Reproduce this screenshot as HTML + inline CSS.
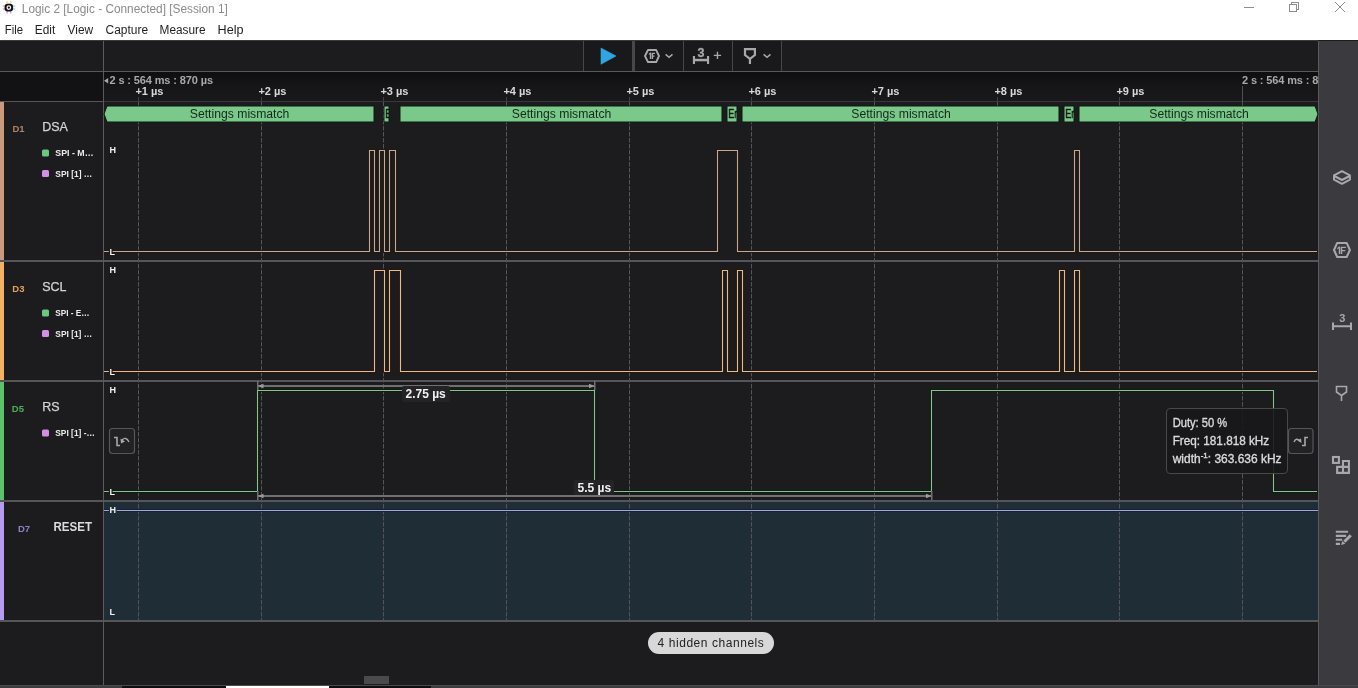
<!DOCTYPE html><html><head><meta charset="utf-8"><style>
html,body{margin:0;padding:0}
body{width:1358px;height:688px;overflow:hidden;position:relative;background:#1c1c1e;font-family:"Liberation Sans",sans-serif}
.a{position:absolute;white-space:nowrap}
svg{will-change:transform}
svg text{font-family:"Liberation Sans",sans-serif}
</style></head><body>
<svg class="a" style="left:0;top:0" width="1358" height="688">
<rect x="0" y="0" width="1358" height="40" fill="#ffffff"/>
<text x="21.8" y="13" font-size="12" fill="#8a8a8a" textLength="206" lengthAdjust="spacingAndGlyphs">Logic 2 [Logic - Connected] [Session 1]</text>
<text x="4.8" y="34" font-size="12" fill="#1e1e1e" textLength="18.3" lengthAdjust="spacingAndGlyphs">File</text>
<text x="34.8" y="34" font-size="12" fill="#1e1e1e" textLength="20.5" lengthAdjust="spacingAndGlyphs">Edit</text>
<text x="67.6" y="34" font-size="12" fill="#1e1e1e" textLength="25.6" lengthAdjust="spacingAndGlyphs">View</text>
<text x="105.6" y="34" font-size="12" fill="#1e1e1e" textLength="42.5" lengthAdjust="spacingAndGlyphs">Capture</text>
<text x="159.6" y="34" font-size="12" fill="#1e1e1e" textLength="46" lengthAdjust="spacingAndGlyphs">Measure</text>
<text x="217.6" y="34" font-size="12" fill="#1e1e1e" textLength="26" lengthAdjust="spacingAndGlyphs">Help</text>
<g>
<rect x="6.3" y="1" width="1.5" height="3" fill="#efe0a0"/><rect x="9.9" y="1" width="1.5" height="3" fill="#efe0a0"/>
<rect x="2.8" y="5.2" width="2.5" height="1.5" fill="#e0b0a8"/><rect x="2.8" y="8.3" width="2.5" height="1.5" fill="#e0b0a8"/>
<rect x="12.6" y="5.2" width="2.6" height="1.5" fill="#a8dcec"/><rect x="12.6" y="8.3" width="2.6" height="1.5" fill="#a8dcec"/>
<rect x="6.3" y="11" width="1.5" height="2.6" fill="#d0a8ec"/><rect x="9.9" y="11" width="1.5" height="2.6" fill="#d0a8ec"/>
<rect x="4.6" y="3.7" width="8.5" height="7.8" rx="3.2" fill="#141018"/>
<circle cx="8.85" cy="7.6" r="1.75" fill="#141018" stroke="#f4f4f4" stroke-width="1.3"/>
</g>
<g stroke="#8c8c8c" stroke-width="1" fill="none" shape-rendering="crispEdges">
<line x1="1244" y1="7.5" x2="1254" y2="7.5"/>
<rect x="1289.5" y="4.5" width="7" height="7"/>
<path d="M1291.5 4.5 V2.5 H1298.5 V9.5 H1296.5"/>
</g>
<path d="M1335 2 L1345 12 M1345 2 L1335 12" stroke="#8c8c8c" stroke-width="1" fill="none"/>
<rect x="0" y="40" width="1358" height="648" fill="#1c1c1e"/>
<rect x="0" y="41" width="1318" height="30" fill="#1c1c1e"/>
<rect x="0" y="40" width="1318" height="1" fill="#3a3a3e"/>
<rect x="584" y="41" width="197" height="30" fill="#19191b"/>
<rect x="0" y="71" width="1318" height="1" fill="#58585c"/>
<defs><linearGradient id="hg" x1="0" y1="0" x2="0" y2="1"><stop offset="0" stop-color="#0e0e10"/><stop offset="0.45" stop-color="#151517"/><stop offset="1" stop-color="#19191b"/></linearGradient></defs>
<rect x="0" y="72" width="1318" height="29" fill="url(#hg)"/>
<rect x="0" y="72" width="103" height="29" fill="#121214"/>
<rect x="0" y="101" width="103" height="1" fill="#56565a"/>
<rect x="104" y="101" width="1214" height="1" fill="#38373c"/>
<rect x="583" y="41" width="1" height="30" fill="#47474b"/>
<rect x="632" y="41" width="3" height="30" fill="#47474b"/>
<rect x="683" y="41" width="1" height="30" fill="#47474b"/>
<rect x="732" y="41" width="1" height="30" fill="#47474b"/>
<rect x="781" y="41" width="1" height="30" fill="#47474b"/>
<rect x="104" y="502" width="1214" height="118" fill="#1f2d37"/>
<rect x="138" y="97" width="1" height="4" fill="#424246"/>
<line x1="138.5" y1="102" x2="138.5" y2="620" stroke="#545458" stroke-width="1" stroke-dasharray="4.5 1.5"/>
<rect x="261" y="97" width="1" height="4" fill="#424246"/>
<line x1="261.5" y1="102" x2="261.5" y2="620" stroke="#545458" stroke-width="1" stroke-dasharray="4.5 1.5"/>
<rect x="383" y="97" width="1" height="4" fill="#424246"/>
<line x1="383.5" y1="102" x2="383.5" y2="620" stroke="#545458" stroke-width="1" stroke-dasharray="4.5 1.5"/>
<rect x="506" y="97" width="1" height="4" fill="#424246"/>
<line x1="506.5" y1="102" x2="506.5" y2="620" stroke="#545458" stroke-width="1" stroke-dasharray="4.5 1.5"/>
<rect x="629" y="97" width="1" height="4" fill="#424246"/>
<line x1="629.5" y1="102" x2="629.5" y2="620" stroke="#545458" stroke-width="1" stroke-dasharray="4.5 1.5"/>
<rect x="751" y="97" width="1" height="4" fill="#424246"/>
<line x1="751.5" y1="102" x2="751.5" y2="620" stroke="#545458" stroke-width="1" stroke-dasharray="4.5 1.5"/>
<rect x="874" y="97" width="1" height="4" fill="#424246"/>
<line x1="874.5" y1="102" x2="874.5" y2="620" stroke="#545458" stroke-width="1" stroke-dasharray="4.5 1.5"/>
<rect x="997" y="97" width="1" height="4" fill="#424246"/>
<line x1="997.5" y1="102" x2="997.5" y2="620" stroke="#545458" stroke-width="1" stroke-dasharray="4.5 1.5"/>
<rect x="1119" y="97" width="1" height="4" fill="#424246"/>
<line x1="1119.5" y1="102" x2="1119.5" y2="620" stroke="#545458" stroke-width="1" stroke-dasharray="4.5 1.5"/>
<rect x="1242" y="97" width="1" height="4" fill="#424246"/>
<line x1="1242.5" y1="102" x2="1242.5" y2="620" stroke="#545458" stroke-width="1" stroke-dasharray="4.5 1.5"/>
<rect x="1242" y="86" width="1" height="16" fill="#505054"/>
<rect x="0" y="260" width="1318" height="2" fill="#56565a"/>
<rect x="0" y="380" width="1318" height="2" fill="#56565a"/>
<rect x="0" y="500" width="1318" height="2" fill="#56565a"/>
<rect x="0" y="620" width="1318" height="2" fill="#56565a"/>
<rect x="103" y="41" width="1" height="644" fill="#5a5a5e"/>
<rect x="0" y="102" width="4" height="158" fill="#c99b7c"/>
<rect x="0" y="262" width="4" height="118" fill="#f5b163"/>
<rect x="0" y="382" width="4" height="118" fill="#5cc36b"/>
<rect x="0" y="502" width="4" height="118" fill="#b49bf0"/>
<rect x="1318" y="41" width="1" height="644" fill="#5a5a5e"/>
<rect x="1319" y="41" width="39" height="644" fill="#3b3a3f"/>
<rect x="0" y="685" width="1358" height="1" fill="#4a4a4e"/>
<rect x="0" y="686" width="1358" height="2" fill="#3d3d40"/>
<rect x="122" y="686" width="104" height="2" fill="#0e0e10"/>
<rect x="226" y="686" width="103" height="2" fill="#ffffff"/>
<rect x="329" y="686" width="102" height="2" fill="#0e0e10"/>
<rect x="364" y="676" width="25" height="8" fill="#4a4a4c"/>
<path d="M104 80.7 L108.2 78 L108.2 83.4 Z" fill="#a8a8a8"/>
<text x="109.5" y="84" font-size="11" font-weight="bold" fill="#a8a8a8" textLength="103.5" lengthAdjust="spacing">2 s : 564 ms : 870 µs</text>
<svg x="1240" y="70" width="78" height="20"><text x="2" y="14" font-size="11" font-weight="bold" fill="#a8a8a8" textLength="103.5" lengthAdjust="spacing">2 s : 564 ms : 870 µs</text></svg>
<text x="135.4" y="95.2" font-size="11" font-weight="bold" fill="#d8d8d8">+1 µs</text>
<text x="258.4" y="95.2" font-size="11" font-weight="bold" fill="#d8d8d8">+2 µs</text>
<text x="380.4" y="95.2" font-size="11" font-weight="bold" fill="#d8d8d8">+3 µs</text>
<text x="503.4" y="95.2" font-size="11" font-weight="bold" fill="#d8d8d8">+4 µs</text>
<text x="626.4" y="95.2" font-size="11" font-weight="bold" fill="#d8d8d8">+5 µs</text>
<text x="748.4" y="95.2" font-size="11" font-weight="bold" fill="#d8d8d8">+6 µs</text>
<text x="871.4" y="95.2" font-size="11" font-weight="bold" fill="#d8d8d8">+7 µs</text>
<text x="994.4" y="95.2" font-size="11" font-weight="bold" fill="#d8d8d8">+8 µs</text>
<text x="1116.4" y="95.2" font-size="11" font-weight="bold" fill="#d8d8d8">+9 µs</text>
<path d="M107 106 H374 V122 H107 L104 114.0 Z" fill="#7ac98a" stroke="#0a1a0e" stroke-width="1"/>
<text x="189.8" y="117.6" font-size="12" fill="#14281a" textLength="99.6" lengthAdjust="spacingAndGlyphs">Settings mismatch</text>
<path d="M384 106 H389 V122 H384 Z" fill="#7ac98a" stroke="#0a1a0e" stroke-width="1"/>
<svg x="384" y="106" width="5" height="16"><text transform="translate(1.2,0) scale(0.72,1)" x="0" y="12" font-size="12.5" fill="#0c1a10" stroke="#0c1a10" stroke-width="0.5">E</text></svg>
<path d="M400 106 H722 V122 H400 Z" fill="#7ac98a" stroke="#0a1a0e" stroke-width="1"/>
<text x="511.8" y="117.6" font-size="12" fill="#14281a" textLength="99.6" lengthAdjust="spacingAndGlyphs">Settings mismatch</text>
<path d="M727 106 H737 V122 H727 Z" fill="#7ac98a" stroke="#0a1a0e" stroke-width="1"/>
<svg x="727" y="106" width="10" height="16"><text transform="translate(1.2,0) scale(0.72,1)" x="0" y="12" font-size="12.5" fill="#0c1a10" stroke="#0c1a10" stroke-width="0.5">Er</text></svg>
<path d="M742 106 H1059 V122 H742 Z" fill="#7ac98a" stroke="#0a1a0e" stroke-width="1"/>
<text x="851.3" y="117.6" font-size="12" fill="#14281a" textLength="99.6" lengthAdjust="spacingAndGlyphs">Settings mismatch</text>
<path d="M1064 106 H1074 V122 H1064 Z" fill="#7ac98a" stroke="#0a1a0e" stroke-width="1"/>
<svg x="1064" y="106" width="10" height="16"><text transform="translate(1.2,0) scale(0.72,1)" x="0" y="12" font-size="12.5" fill="#0c1a10" stroke="#0c1a10" stroke-width="0.5">Er</text></svg>
<path d="M1079 106 H1315 L1318 114.0 L1315 122 H1079 Z" fill="#7ac98a" stroke="#0a1a0e" stroke-width="1"/>
<text x="1149.3" y="117.6" font-size="12" fill="#14281a" textLength="99.6" lengthAdjust="spacingAndGlyphs">Settings mismatch</text>
<text x="12.5" y="132" font-size="9.5" font-weight="bold" fill="#b0846a">D1</text>
<text x="42.2" y="131" font-size="12.5" fill="#d4d4d4" stroke="#d4d4d4" stroke-width="0.25">DSA</text>
<rect x="42" y="149.4" width="7" height="7" rx="1.5" fill="#6cc77f"/>
<text x="55.3" y="156.4" font-size="9" font-weight="bold" fill="#ececec" textLength="38.2" lengthAdjust="spacingAndGlyphs">SPI - M…</text>
<rect x="42" y="169.9" width="7" height="7" rx="1.5" fill="#d58de8"/>
<text x="55.3" y="176.9" font-size="9" font-weight="bold" fill="#ececec" textLength="37" lengthAdjust="spacingAndGlyphs">SPI [1] …</text>
<text x="12.3" y="292" font-size="9.5" font-weight="bold" fill="#e8a25a">D3</text>
<text x="42.2" y="291" font-size="12.5" fill="#d4d4d4" stroke="#d4d4d4" stroke-width="0.25">SCL</text>
<rect x="42" y="309.4" width="7" height="7" rx="1.5" fill="#6cc77f"/>
<text x="55.3" y="316.4" font-size="9" font-weight="bold" fill="#ececec" textLength="34.3" lengthAdjust="spacingAndGlyphs">SPI - E…</text>
<rect x="42" y="329.9" width="7" height="7" rx="1.5" fill="#d58de8"/>
<text x="55.3" y="336.9" font-size="9" font-weight="bold" fill="#ececec" textLength="36.8" lengthAdjust="spacingAndGlyphs">SPI [1] …</text>
<text x="11.8" y="412" font-size="9.5" font-weight="bold" fill="#4fae5a">D5</text>
<text x="42.2" y="411" font-size="12.5" fill="#d4d4d4" stroke="#d4d4d4" stroke-width="0.25">RS</text>
<rect x="42" y="429.4" width="7" height="7" rx="1.5" fill="#d58de8"/>
<text x="55.3" y="436.4" font-size="9" font-weight="bold" fill="#ececec" textLength="39.5" lengthAdjust="spacingAndGlyphs">SPI [1] -…</text>
<text x="18" y="532" font-size="9.5" font-weight="bold" fill="#8f7fc8">D7</text>
<text x="53.5" y="531" font-size="12" font-weight="bold" fill="#dcdcdc" textLength="38.5" lengthAdjust="spacingAndGlyphs">RESET</text>
<path d="M104 251.5 H369.5 V150.5 H374.5 V251.5 H379.5 V150.5 H384.5 V251.5 H389.5 V150.5 H395.5 V251.5 H717.5 V150.5 H737.5 V251.5 H1074.5 V150.5 H1079.5 V251.5 H1317" fill="none" stroke="#24170f" stroke-width="3.2"/>
<path d="M104 251.5 H369.5 V150.5 H374.5 V251.5 H379.5 V150.5 H384.5 V251.5 H389.5 V150.5 H395.5 V251.5 H717.5 V150.5 H737.5 V251.5 H1074.5 V150.5 H1079.5 V251.5 H1317" fill="none" stroke="#bcab9f" stroke-width="1.1"/>
<path d="M104 371.5 H374.5 V270.5 H384.5 V371.5 H389.5 V270.5 H400.5 V371.5 H722.5 V270.5 H727.5 V371.5 H737.5 V270.5 H742.5 V371.5 H1059.5 V270.5 H1064.5 V371.5 H1074.5 V270.5 H1079.5 V371.5 H1317" fill="none" stroke="#2a1606" stroke-width="3.2"/>
<path d="M104 371.5 H374.5 V270.5 H384.5 V371.5 H389.5 V270.5 H400.5 V371.5 H722.5 V270.5 H727.5 V371.5 H737.5 V270.5 H742.5 V371.5 H1059.5 V270.5 H1064.5 V371.5 H1074.5 V270.5 H1079.5 V371.5 H1317" fill="none" stroke="#d9bea6" stroke-width="1.1"/>
<path d="M104 491.5 H257.5 V390.5 H594.5 V491.5 H931.5 V390.5 H1273.5 V491.5 H1317" fill="none" stroke="#0b1f0e" stroke-width="3.2"/>
<path d="M104 491.5 H257.5 V390.5 H594.5 V491.5 H931.5 V390.5 H1273.5 V491.5 H1317" fill="none" stroke="#94bc99" stroke-width="1.1"/>
<rect x="104" y="509" width="1214" height="3" fill="#18203a"/>
<rect x="104" y="510" width="1214" height="1" fill="#a0aad0"/>
<text x="109.6" y="153.2" font-size="9" font-weight="bold" fill="#f0f0f0" stroke="#1c1c1e" stroke-width="2.5" paint-order="stroke">H</text>
<text x="109.6" y="255.1" font-size="9" font-weight="bold" fill="#f0f0f0" stroke="#1c1c1e" stroke-width="2.5" paint-order="stroke">L</text>
<text x="109.6" y="273.2" font-size="9" font-weight="bold" fill="#f0f0f0" stroke="#1c1c1e" stroke-width="2.5" paint-order="stroke">H</text>
<text x="109.6" y="375.1" font-size="9" font-weight="bold" fill="#f0f0f0" stroke="#1c1c1e" stroke-width="2.5" paint-order="stroke">L</text>
<text x="109.6" y="393.2" font-size="9" font-weight="bold" fill="#f0f0f0" stroke="#1c1c1e" stroke-width="2.5" paint-order="stroke">H</text>
<text x="109.6" y="495.1" font-size="9" font-weight="bold" fill="#f0f0f0" stroke="#1c1c1e" stroke-width="2.5" paint-order="stroke">L</text>
<text x="109.6" y="513.2" font-size="9" font-weight="bold" fill="#f0f0f0" stroke="#1f2d37" stroke-width="2.5" paint-order="stroke">H</text>
<text x="109.6" y="615.1" font-size="9" font-weight="bold" fill="#f0f0f0" stroke="#1f2d37" stroke-width="2.5" paint-order="stroke">L</text>
<path d="M601 48 L616 56 L601 64.3 Z" fill="#2fa6df" stroke="#2fa6df" stroke-width="0.6" stroke-linejoin="round"/>
<path d="M645 56 L648 50.05 H656.2 L659 56 L656.2 62.05 H648 Z" fill="none" stroke="#a8a8a8" stroke-width="1.9" stroke-linejoin="round"/>
<path d="M649.8 52.7 h1.4 v6.3 h-1.4 Z M651.7 52.7 h3.3 v1.3 h-1.9 v1.5 h1.4 v1.2 h-1.4 v2.3 h-1.4 Z" fill="#a8a8a8"/>
<path d="M648.9 54.3 L650.6 52.9" stroke="#a8a8a8" stroke-width="1.1"/>
<path d="M665.6 54.4 L669.05 57.3 L672.5 54.4" fill="none" stroke="#a8a8a8" stroke-width="1.5"/>
<path d="M693.95 56 V64.1 M708.05 56 V64.1" fill="none" stroke="#a8a8a8" stroke-width="2.1"/>
<path d="M694 60.05 H708" fill="none" stroke="#a8a8a8" stroke-width="2.5"/>
<text x="701" y="57.1" font-size="12.5" font-weight="bold" text-anchor="middle" fill="#a8a8a8" stroke="#a8a8a8" stroke-width="0.3">3</text>
<path d="M713.8 55.4 H721.1 M717.45 51.8 V59" fill="none" stroke="#a8a8a8" stroke-width="1.4"/>
<path d="M745 49.1 H754.9 V55 L749.95 58.8 L745 55 Z M749.95 58.8 V63.9" fill="none" stroke="#a8a8a8" stroke-width="2.2"/>
<path d="M763.6 54.4 L767.05 57.3 L770.5 54.4" fill="none" stroke="#a8a8a8" stroke-width="1.5"/>
<path d="M1342 171.2 L1349.9 175.4 V179.6 L1342 183.8 L1334 179.6 V175.4 Z" fill="none" stroke="#a9a9ad" stroke-width="2" stroke-linejoin="round"/>
<path d="M1334.4 176 L1342 180 L1349.6 176" fill="none" stroke="#a9a9ad" stroke-width="2" stroke-linejoin="round"/>
<path d="M1334 250 L1337.2 242.9 H1346.7 L1349.9 250 L1346.7 257 H1337.2 Z" fill="none" stroke="#a9a9ad" stroke-width="2" stroke-linejoin="round"/>
<path d="M1338.8 246.7 h1.4 v7.4 h-1.4 Z M1340.8 246.7 h5.1 v1.4 h-3.7 v1.9 h3.1 v1.3 h-3.1 v2.8 h-1.4 Z" fill="#a9a9ad"/>
<path d="M1337.4 248.7 L1339.5 246.9" stroke="#a9a9ad" stroke-width="1.2"/>
<path d="M1333 322.4 V330 M1351 322.4 V330 M1333 326.3 H1351" fill="none" stroke="#a9a9ad" stroke-width="2"/>
<text x="1342.4" y="322.4" font-size="11" font-weight="bold" text-anchor="middle" fill="#a9a9ad">3</text>
<path d="M1336.5 386.5 H1346.5 V392 L1341.5 395.5 L1336.5 392 Z M1341.5 395.5 V401" fill="none" stroke="#a9a9ad" stroke-width="1.6"/>
<rect x="1333" y="457" width="5.9" height="5.9" fill="none" stroke="#a9a9ad" stroke-width="2.1"/>
<path d="M1343 461 H1348.9 V472.9 H1337.15 V466.9 H1343 Z M1343 461 V472.9 M1337.15 466.9 H1348.9" fill="none" stroke="#a9a9ad" stroke-width="2.1"/>
<path d="M1335.8 531.8 H1348.1 M1335.8 535.9 H1346.1 M1335.8 539.8 H1342.2 M1335.8 543.9 H1340" fill="none" stroke="#a9a9ad" stroke-width="2.1"/>
<path d="M1344.3 541.8 L1350.8 535.3" fill="none" stroke="#a9a9ad" stroke-width="3"/>
<path d="M1341.2 544.9 L1342.3 540.9 L1345.3 543.8 Z" fill="#a9a9ad"/>
<rect x="257" y="381" width="1.5" height="9" fill="#707072"/>
<rect x="594" y="381" width="1.5" height="9" fill="#707072"/>
<rect x="257" y="385" width="337" height="2" fill="#707072"/>
<path d="M258 386 L263.5 383.7 V388.3 Z" fill="#9c9c9e"/>
<path d="M594.5 386 L589 383.7 V388.3 Z" fill="#9c9c9e"/>
<rect x="257" y="491" width="1.5" height="9" fill="#707072"/>
<rect x="931" y="491" width="1.5" height="9" fill="#707072"/>
<rect x="257" y="495" width="674" height="2" fill="#707072"/>
<path d="M258 496 L263.5 493.7 V498.3 Z" fill="#9c9c9e"/>
<path d="M931.5 496 L926 493.7 V498.3 Z" fill="#9c9c9e"/>
<rect x="402" y="386" width="48" height="16" rx="2" fill="#242426"/>
<text x="405.5" y="398" font-size="12" font-weight="bold" fill="#f2f2f2">2.75 µs</text>
<rect x="573.5" y="480" width="40.5" height="15" rx="2" fill="#242426"/>
<text x="577.5" y="492" font-size="12" font-weight="bold" fill="#f2f2f2">5.5 µs</text>
<rect x="109.5" y="428.5" width="25" height="25" rx="3" fill="#222224" stroke="#55555a" stroke-width="1.2"/>
<path d="M114 437.5 H117 V445.5 H120" fill="none" stroke="#a8a8a8" stroke-width="1.6"/>
<path d="M129 442 Q126 436 122 440" fill="none" stroke="#a8a8a8" stroke-width="1.4"/>
<path d="M120.5 438.5 L121 443.5 L125 441.5 Z" fill="#a8a8a8"/>
<rect x="1288.5" y="428.5" width="24.5" height="25" rx="3" fill="#222224" stroke="#55555a" stroke-width="1.2"/>
<path d="M1294 442 Q1296 437 1300 441" fill="none" stroke="#a8a8a8" stroke-width="1.4"/>
<path d="M1301.5 443 L1301 438.5 L1297.5 440.5 Z" fill="#a8a8a8"/>
<path d="M1302 445.5 H1305 V437.5 H1308" fill="none" stroke="#a8a8a8" stroke-width="1.6"/>
<rect x="1166.5" y="408.5" width="121" height="65" rx="3.5" fill="#18181a" fill-opacity="0.9" stroke="#48484c" stroke-width="1"/>
<g fill="#dadada" stroke="#dadada" stroke-width="0.35" font-size="12">
<text x="1172.7" y="427.1" textLength="54.5" lengthAdjust="spacingAndGlyphs">Duty: 50 %</text>
<text x="1172.7" y="445" textLength="96.5" lengthAdjust="spacingAndGlyphs">Freq: 181.818 kHz</text>
<text x="1172.7" y="463" textLength="108.9" lengthAdjust="spacingAndGlyphs">width<tspan font-size="8" dy="-5">-1</tspan><tspan dy="5">: 363.636 kHz</tspan></text>
</g>
<rect x="648" y="632" width="126" height="22" rx="11" fill="#d8d8d8"/>
<text x="711" y="647" font-size="12" text-anchor="middle" fill="#222222" letter-spacing="0.55">4 hidden channels</text>
</svg>
</body></html>
